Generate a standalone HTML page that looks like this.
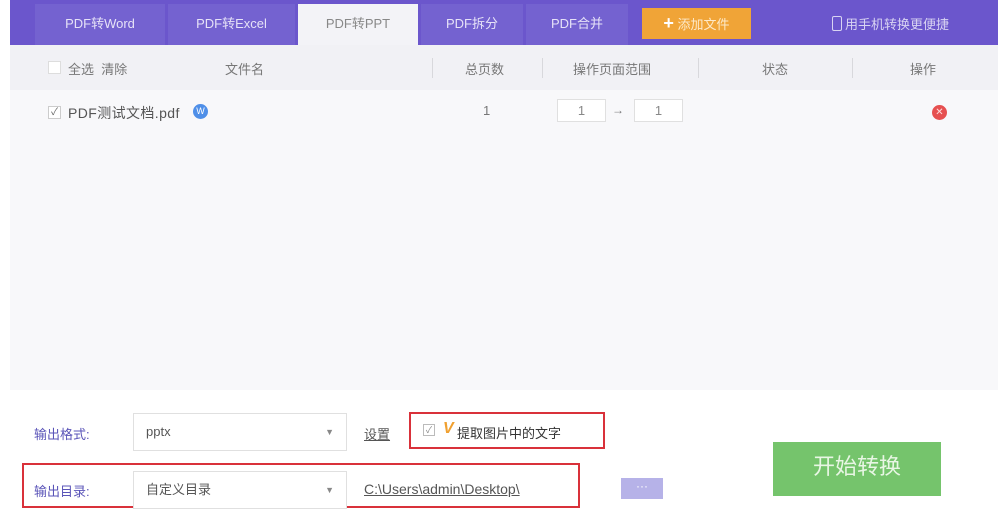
<!DOCTYPE html><html><head><meta charset="utf-8"><style>
*{margin:0;padding:0;box-sizing:border-box}
body{width:998px;height:525px;background:#fff;font-family:"Liberation Sans","Noto Sans CJK SC",sans-serif;position:relative;overflow:hidden;color:#555;font-size:14px}
.a{position:absolute}
.top{left:10px;top:0;width:988px;height:45px;background:#6b56cc}
.tab{top:4px;height:41px;line-height:40px;text-align:center;color:#e6e2f7;font-size:13px;background:#7462d0}
.act{background:#f3f3f7;color:#888}
.hdr{left:10px;top:45px;width:988px;height:45px;background:#f1f1f5}
.list{left:10px;top:90px;width:988px;height:300px;background:#f8f8fa}
.sep{top:58px;width:1px;height:20px;background:#d8d8dc}
.t{font-size:13px;color:#777}
.box{border:1px solid #e0e0e0;background:#fff}
</style></head><body>
<div class="a top"></div>
<div class="a tab" style="left:35px;width:130px">PDF转Word</div>
<div class="a tab" style="left:168px;width:127px">PDF转Excel</div>
<div class="a tab act" style="left:298px;width:120px">PDF转PPT</div>
<div class="a tab" style="left:421px;width:102px">PDF拆分</div>
<div class="a tab" style="left:526px;width:102px">PDF合并</div>
<div class="a" style="left:642px;top:8px;width:109px;height:31px;background:#f0a437;color:#fde9c8;line-height:31px;text-align:center;font-size:13px"><b style="color:#fff;font-size:18px">+</b> 添加文件</div>
<div class="a" style="left:832px;top:14px;color:#d9d4f2;font-size:13px"><span style="display:inline-block;width:10px;height:15px;border:1.5px solid #d9d4f2;border-radius:2px;vertical-align:-2px;margin-right:3px"></span>用手机转换更便捷</div>
<div class="a hdr"></div>
<div class="a" style="left:48px;top:61px;width:13px;height:13px;background:#fff;border:1px solid #ddd"></div>
<div class="a t" style="left:68px;top:59px">全选 &nbsp;清除</div>
<div class="a t" style="left:225px;top:59px">文件名</div>
<div class="a sep" style="left:432px"></div>
<div class="a t" style="left:465px;top:59px">总页数</div>
<div class="a sep" style="left:542px"></div>
<div class="a t" style="left:573px;top:59px">操作页面范围</div>
<div class="a sep" style="left:698px"></div>
<div class="a t" style="left:762px;top:59px">状态</div>
<div class="a sep" style="left:852px"></div>
<div class="a t" style="left:910px;top:59px">操作</div>
<div class="a list"></div>
<div class="a" style="left:48px;top:106px;width:13px;height:13px;background:#fff;border:1px solid #ccc;font-size:10px;line-height:11px;text-align:center;color:#666">✓</div>
<div class="a" style="left:68px;top:103px;color:#555;font-size:14px;letter-spacing:0.4px">PDF测试文档.pdf</div>
<div class="a" style="left:193px;top:104px;width:15px;height:15px;border-radius:50%;background:#4f8fe8;color:#fff;font-size:9px;line-height:15px;text-align:center">W</div>
<div class="a t" style="left:483px;top:103px">1</div>
<div class="a box" style="left:557px;top:99px;width:49px;height:23px;text-align:center;line-height:21px;font-size:13px;color:#888">1</div>
<div class="a" style="left:612px;top:103px;font-size:12px;color:#777">→</div>
<div class="a box" style="left:634px;top:99px;width:49px;height:23px;text-align:center;line-height:21px;font-size:13px;color:#888">1</div>
<div class="a" style="left:932px;top:105px;width:15px;height:15px;border-radius:50%;background:#e65050;color:#fdd;font-size:10px;line-height:15px;text-align:center">✕</div>
<div class="a" style="left:34px;top:424px;color:#5a54b8;font-size:13px">输出格式:</div>
<div class="a box" style="left:133px;top:413px;width:214px;height:38px;line-height:36px;padding-left:12px;color:#555;font-size:13px">pptx<span style="position:absolute;right:12px;font-size:9px;color:#888">▼</span></div>
<div class="a" style="left:364px;top:424px;color:#555;text-decoration:underline;font-size:13px">设置</div>
<div class="a" style="left:409px;top:412px;width:196px;height:37px;border:2px solid #d9313a"></div>
<div class="a" style="left:423px;top:424px;width:12px;height:12px;border:1px solid #bbb;font-size:9px;line-height:10px;text-align:center;color:#888">✓</div>
<div class="a" style="left:443px;top:420px;color:#f0a030;font-weight:bold;font-size:16px;font-style:italic">V</div>
<div class="a" style="left:457px;top:423px;color:#333;font-size:13px">提取图片中的文字</div>
<div class="a" style="left:22px;top:463px;width:558px;height:45px;border:2px solid #d9313a"></div>
<div class="a" style="left:34px;top:481px;color:#5a54b8;font-size:13px">输出目录:</div>
<div class="a box" style="left:133px;top:471px;width:214px;height:38px;line-height:36px;padding-left:12px;color:#555;font-size:13px">自定义目录<span style="position:absolute;right:12px;font-size:9px;color:#888">▼</span></div>
<div class="a" style="left:364px;top:481px;color:#555;text-decoration:underline;font-size:14px">C:\Users\admin\Desktop\</div>
<div class="a" style="left:621px;top:478px;width:42px;height:21px;background:#b6b2e8;color:#fff;text-align:center;line-height:16px;font-size:12px">···</div>
<div class="a" style="left:773px;top:442px;width:168px;height:54px;background:#75c46c;color:#e8f6e4;font-size:22px;line-height:50px;text-align:center">开始转换</div>
</body></html>
